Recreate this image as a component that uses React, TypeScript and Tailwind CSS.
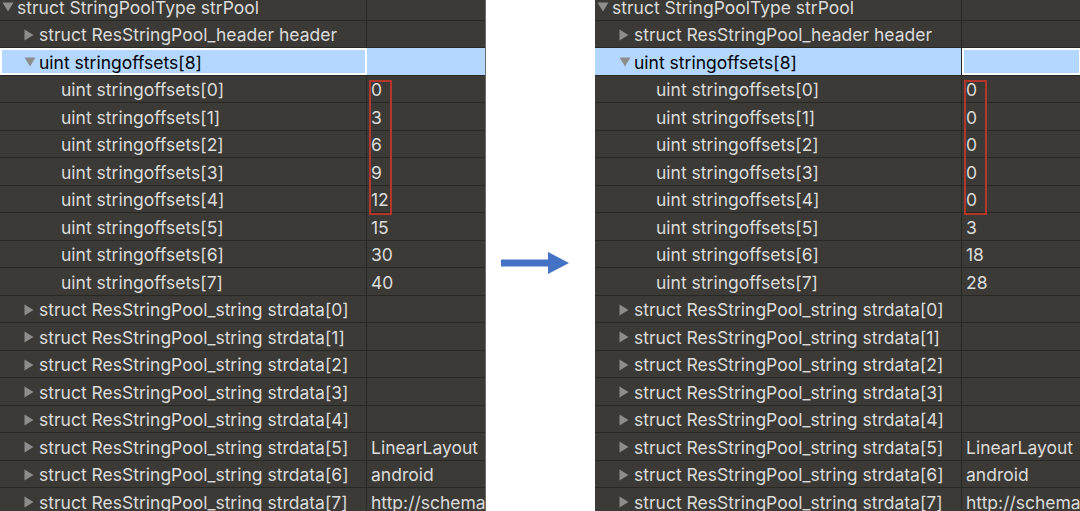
import React from 'react';

type Row = { level: number; label: string; expand?: 'open' | 'closed'; value?: string; selected?: boolean };

const FONT = { fontFamily: 'Inter, "Helvetica Neue", Arial, sans-serif' };

function makeRows(vals: string[]): Row[] {
  const rows: Row[] = [
    { level: 0, label: 'struct StringPoolType strPool', expand: 'open' },
    { level: 1, label: 'struct ResStringPool_header header', expand: 'closed' },
    { level: 1, label: 'uint stringoffsets[8]', expand: 'open', selected: true },
  ];
  vals.forEach((v, i) => rows.push({ level: 2, label: `uint stringoffsets[${i}]`, value: v }));
  const strs = ['', '', '', '', '', 'LinearLayout', 'android', 'http://schemas.android.com/apk/res/android'];
  strs.forEach((s, i) =>
    rows.push({ level: 1, label: `struct ResStringPool_string strdata[${i}]`, expand: 'closed', value: s })
  );
  return rows;
}

function Triangle({ open }: { open: boolean }) {
  return open ? (
    <svg width="12" height="10" viewBox="0 0 12 10" className="shrink-0">
      <path d="M0.5 0.5 L11.5 0.5 L6 9.5 Z" fill="#8d8d8b" />
    </svg>
  ) : (
    <svg width="10" height="12" viewBox="0 0 10 12" className="shrink-0">
      <path d="M0.5 0.5 L9.5 6 L0.5 11.5 Z" fill="#8d8d8b" />
    </svg>
  );
}

function Panel({ vals, focusValue }: { vals: string[]; focusValue: boolean }) {
  const rows = makeRows(vals);
  return (
    <div className="relative h-[511px] w-[486px] shrink-0 overflow-hidden bg-[#3b3a37]" style={FONT}>
      <div className="mt-[-7px]">
        {rows.map((r, i) => (
          <div key={i} className="flex h-[27.5px] border-b border-[#282825] text-[17.5px] leading-none">
            <div
              className={
                'flex w-[367px] shrink-0 items-center border-r border-[#282825] pt-[2px] ' +
                (r.selected
                  ? focusValue
                    ? 'bg-[#b3d7ff] text-black'
                    : 'bg-[#b3d7ff] text-black outline outline-2 -outline-offset-2 outline-white'
                  : 'text-[#dcdcda]')
              }
              style={{ paddingLeft: r.level * 22 + 2 }}
            >
              <div className="flex w-[15px] shrink-0 items-center">
                {r.expand && <Triangle open={r.expand === 'open'} />}
              </div>
              <span className="whitespace-nowrap">{r.label}</span>
            </div>
            <div
              className={
                'relative flex min-w-0 flex-1 items-center overflow-hidden pl-[4px] pt-[2px] ' +
                (r.selected
                  ? focusValue
                    ? 'bg-[#b3d7ff] outline outline-2 -outline-offset-2 outline-white'
                    : 'bg-[#b3d7ff]'
                  : 'text-[#dcdcda]')
              }
            >
              <span className="whitespace-nowrap">{r.value}</span>
            </div>
          </div>
        ))}
      </div>
      <div className="pointer-events-none absolute left-[369px] top-[80px] h-[135px] w-[23px] border-2 border-[#b3362b]" />
      <div className="absolute right-0 top-0 h-full w-px bg-[#6d6c69]" />
    </div>
  );
}

export default function App() {
  return (
    <div className="flex h-[511px] w-[1080px] overflow-hidden bg-white">
      <Panel vals={['0', '3', '6', '9', '12', '15', '30', '40']} focusValue={false} />
      <div className="flex w-[109px] shrink-0 items-center justify-center pt-[14px]">
        <svg width="68" height="22" viewBox="0 0 68 22" className="ml-[-12px]">
          <path d="M0 7.5 H47 V0 L68 11 L47 22 V14.5 H0 Z" fill="#4472c4" />
        </svg>
      </div>
      <div className="w-[485px] shrink-0 overflow-hidden">
        <Panel vals={['0', '0', '0', '0', '0', '3', '18', '28']} focusValue={true} />
      </div>
    </div>
  );
}
